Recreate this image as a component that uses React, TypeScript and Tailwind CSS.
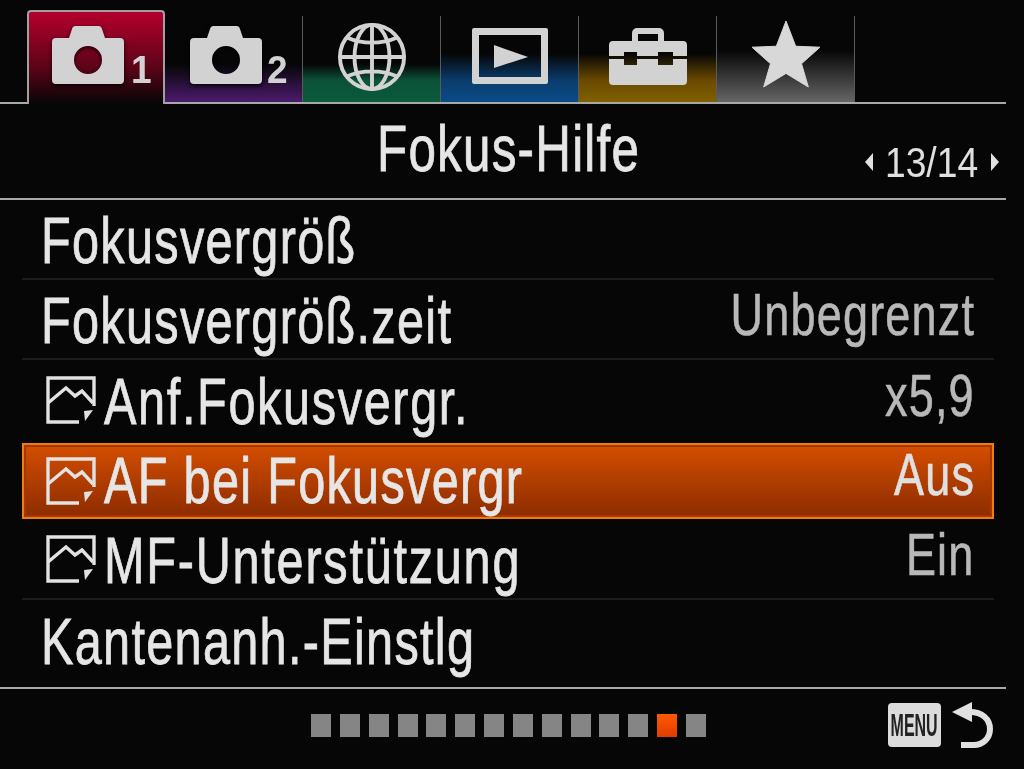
import React from "react";

const FONT = "font-['Liberation_Sans',Arial,sans-serif]";

const CAMERA = "M24 0h22a4 4 0 0 1 4 3l3 9h15a4 4 0 0 1 4 4v38a4 4 0 0 1-4 4H4a4 4 0 0 1-4-4V16a4 4 0 0 1 4-4h13l3-9a4 4 0 0 1 4-3zM36 20a14 14 0 1 0 0 28 14 14 0 0 0 0-28z";

function Camera({ n, extra }: { n: string; extra: string }) {
  return (
    <div className="flex items-end self-start">
      <svg width="72" height="58" viewBox="0 0 72 58" className="drop-shadow-[0_2px_2px_rgba(0,0,0,0.8)]">
        <path d={CAMERA} fill="#d2d2d2" fillRule="evenodd" />
      </svg>
      <span className={`${extra} text-[39px] leading-[28px] font-bold text-[#d2d2d2] inline-block scale-x-[0.95] origin-left`}>{n}</span>
    </div>
  );
}

function Globe() {
  return (
    <svg width="70" height="70" viewBox="0 0 72 72" fill="none" stroke="#d2d2d2" strokeWidth="4">
      <circle cx="36" cy="36" r="33" />
      <ellipse cx="36" cy="36" rx="18" ry="33" />
      <path d="M36 3v66M3 36h66M10 16c16 7 36 7 52 0M10 56c16-7 36-7 52 0" />
    </svg>
  );
}

function PlayBox() {
  return (
    <svg width="76" height="56" viewBox="0 0 76 56">
      <path d="M2 0h72a2 2 0 0 1 2 2v52a2 2 0 0 1-2 2H2a2 2 0 0 1-2-2V2a2 2 0 0 1 2-2zM7 7v42h62V7z" fill="#d2d2d2" fillRule="evenodd" />
      <path d="M22 17l34 12-34 11z" fill="#d2d2d2" />
    </svg>
  );
}

function Toolbox() {
  return (
    <svg width="78" height="57" viewBox="0 0 78 57">
      <path d="M23 13V5a5 5 0 0 1 5-5h22a5 5 0 0 1 5 5v8h-6V6H29v7z" fill="#d2d2d2" />
      <path d="M4 13h70a4 4 0 0 1 4 4v11H64v-4H49v4H28v-4H15v4H0V17a4 4 0 0 1 4-4z" fill="#d2d2d2" />
      <path d="M0 31h15v6h13v-6h21v6h15v-6h14v22a4 4 0 0 1-4 4H4a4 4 0 0 1-4-4z" fill="#d2d2d2" />
    </svg>
  );
}

function Star() {
  return (
    <svg width="70" height="68" viewBox="0 0 72 70">
      <path d="M36 1l10 26 25 1-19 17 7 24-23-14-23 14 7-24L1 28l25-1z" fill="#d8d8d8" stroke="#d8d8d8" strokeLinejoin="round" />
    </svg>
  );
}

function ImageIcon() {
  return (
    <svg width="50" height="50" viewBox="0 0 50 50" fill="none" stroke="#e2e2e2" strokeWidth="3.4" className="shrink-0">
      <path d="M33 47H2V3h46v28" />
      <path d="M2 28l18-15 9 8 7-5 11 12" />
      <path d="M47 35l-9 1 1 10z" fill="#e2e2e2" stroke="none" />
    </svg>
  );
}

function BackArrow() {
  return (
    <svg width="44" height="50" viewBox="0 0 44 50" fill="none" className="ml-[9px]">
      <path d="M2 12l20-10v20z" fill="#e0e0e0" />
      <path d="M20 12c12 0 20 7 20 17 0 10-8 16-16 16H11" stroke="#e0e0e0" strokeWidth="6" />
    </svg>
  );
}

const TABS = [
  { pad: "justify-start pl-[25px] pt-[10px]", grad: "bg-[linear-gradient(to_bottom,transparent_56%,#4c1a6c_100%)]", icon: <Camera n="2" extra="ml-[5px]" /> },
  { pad: "justify-center pt-[6px]", grad: "bg-[linear-gradient(to_bottom,transparent_56%,#0b5238_75%,#0a5a3c_100%)]", icon: <Globe /> },
  { pad: "justify-center pt-[12px]", grad: "bg-[linear-gradient(to_bottom,transparent_44%,#0a3c6c_75%,#0a4c88_100%)]", icon: <PlayBox /> },
  { pad: "justify-center pt-[12px]", grad: "bg-[linear-gradient(to_bottom,transparent_44%,#6a4a00_75%,#806000_100%)]", icon: <Toolbox /> },
  { pad: "justify-center pt-[4px]", grad: "bg-[linear-gradient(to_bottom,transparent_40%,#666666_100%)]", icon: <Star /> },
];

const ROWS = [
  { label: "Fokusvergröß", track: "tracking-[1.7px]" },
  { label: "Fokusvergröß.zeit", value: "Unbegrenzt", track: "tracking-[1.7px]" },
  { label: "Anf.Fokusvergr.", value: "x5,9", icon: true, plain: true, track: "tracking-[2.15px]" },
  { label: "AF bei Fokusvergr", value: "Aus", icon: true, active: true, track: "tracking-[1.7px]" },
  { label: "MF-Unterstützung", value: "Ein", icon: true, track: "tracking-[2.3px]" },
  { label: "Kantenanh.-Einstlg", plain: true, track: "tracking-[1.7px]" },
];

function Row({ r }: { r: (typeof ROWS)[number] }) {
  let shell = "h-[80px] border-b-2 border-[#1c1c1c] pl-[24px] pr-[19px]";
  if (r.plain) shell = "h-[80px] pl-[24px] pr-[19px]";
  if (r.active) shell = "mt-[3px] mb-[1px] h-[76px] border-2 border-[#ee7c10] bg-[linear-gradient(to_bottom,#d44e00,#8c2c00)] shadow-[inset_0_0_0_2px_#a83600] pl-[22px] pr-[17px]";
  return (
    <div className={`flex items-center ${shell}`}>
      {r.icon && <ImageIcon />}
      <span className={`inline-block origin-left scale-x-[0.76] whitespace-nowrap text-[64px] leading-none text-[#e6e6e6] [-webkit-text-stroke:0.8px_currentColor] ${r.track} ${r.active ? "" : "pt-[4px]"} ${r.icon ? "ml-[8px]" : "-ml-[5px]"}`}>
        {r.label}
      </span>
      {r.value && (
        <span className={`ml-auto inline-block origin-right scale-x-[0.75] whitespace-nowrap text-[60px] leading-none tracking-[1.6px] [-webkit-text-stroke:0.6px_currentColor] ${r.active ? "pb-[12px] text-[#e0e0e0]" : "pb-[8px] text-[#b8b8b8]"}`}>
          {r.value}
        </span>
      )}
    </div>
  );
}

export default function App() {
  return (
    <div className={`${FONT} h-[769px] w-[1024px] overflow-hidden bg-[#060606]`}>
      {/* tabs */}
      <div className="flex h-[104px] w-[1006px] items-end border-b-2 border-[#a8a8a8] pl-[27px]">
        <div className="-mb-[2px] flex h-[94px] w-[138px] justify-start rounded-t-[4px] border-x-2 border-t-2 border-x-[#a0a0a0] border-t-[#a0a0a0] bg-[linear-gradient(to_bottom,#b4002c,#5c0418_60%,#060606_100%)] pl-[23px] pt-[14px]">
          <Camera n="1" extra="ml-[7px]" />
        </div>
        {TABS.map((t, i) => (
          <div key={i} className={`flex h-[86px] w-[138px] items-start border-r border-[#5a5a5a] ${t.pad} ${t.grad}`}>
            {t.icon}
          </div>
        ))}
      </div>

      {/* title */}
      <div className="flex h-[96px] w-[1006px] border-b-2 border-[#a8a8a8]">
        <span className="ml-[377px] mt-[15px] inline-block origin-left scale-x-[0.76] whitespace-nowrap text-[65px] leading-[60px] tracking-[1.6px] text-[#e6e6e6] [-webkit-text-stroke:0.8px_currentColor]">
          Fokus-Hilfe
        </span>
        <div className="ml-auto mr-[6px] mt-[35px] flex h-[46px] w-[136px] items-center text-[#e0e0e0]">
          <svg width="10" height="20" viewBox="0 0 10 20"><path d="M9 1v18L1 10z" fill="#e0e0e0" /></svg>
          <span className="ml-[11px] inline-block w-[105px] origin-left scale-x-[0.865] whitespace-nowrap text-[43px] leading-[46px]">13/14</span>
          <svg width="10" height="20" viewBox="0 0 10 20"><path d="M1 1v18l8-9z" fill="#e0e0e0" /></svg>
        </div>
      </div>

      {/* rows */}
      <div className="ml-[22px] w-[972px]">
        {ROWS.map((r) => (
          <Row key={r.label} r={r} />
        ))}
      </div>

      {/* footer */}
      <div className="mt-[7px] w-[1006px] border-t-2 border-[#a8a8a8]" />
      <div className="flex h-[72px] w-[1006px] items-center pl-[311px]">
        <div className="flex gap-[8.85px]">
          {Array.from({ length: 14 }).map((_, i) => (
            <div key={i} className={`h-[23px] w-[20px] ${i === 12 ? "bg-[linear-gradient(to_bottom,#ff5a00,#e03c00)]" : "bg-[#858585]"}`} />
          ))}
        </div>
        <div className="ml-[182px] flex h-[44px] w-[53px] items-center justify-center overflow-hidden rounded-[4px] bg-[#dcdcdc]">
          <span className="inline-block scale-x-[0.5] text-[32px] leading-none font-bold text-[#222]">MENU</span>
        </div>
        <BackArrow />
      </div>
    </div>
  );
}
